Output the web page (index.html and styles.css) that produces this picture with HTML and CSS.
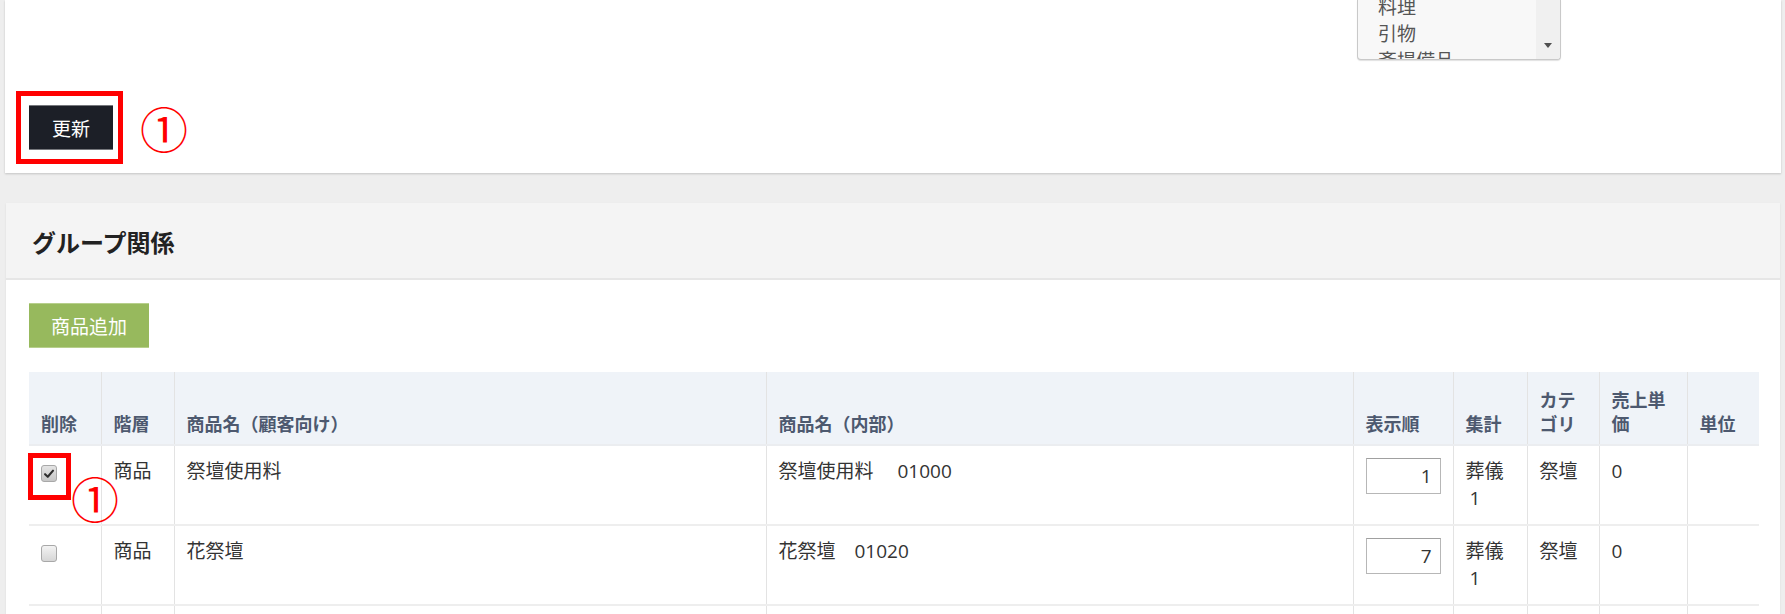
FILE: index.html
```html
<!DOCTYPE html>
<html lang="ja">
<head>
<meta charset="utf-8">
<title>グループ関係</title>
<link rel="stylesheet" href="styles.css">
</head>
<body>
<div class="page">
  <section class="panel panel-top">
    <div class="form-row">
      <div class="listbox">
        <ul class="listbox-items">
          <li>料理</li>
          <li>引物</li>
          <li>斎場備品</li>
        </ul>
        <div class="listbox-scroll"><span class="scroll-arrow"></span></div>
      </div>
    </div>
    <div class="actions">
      <span class="btn-wrap">
        <button class="btn btn-dark" type="button">更新</button>
        <span class="annot-box annot-box-btn"></span>
      </span>
      <span class="annot-num annot-num-inline">①</span>
    </div>
  </section>

  <section class="panel panel-group">
    <header class="panel-head"><h2 class="panel-title">グループ関係</h2></header>
    <div class="panel-body">
      <button class="btn btn-green" type="button">商品追加</button>
      <table class="grid">
        <colgroup>
          <col class="c-del"><col class="c-level"><col class="c-name"><col class="c-inner">
          <col class="c-order"><col class="c-sum"><col class="c-cat"><col class="c-price"><col class="c-unit">
        </colgroup>
        <thead>
          <tr>
            <th>削除</th>
            <th>階層</th>
            <th>商品名（顧客向け）</th>
            <th>商品名（内部）</th>
            <th>表示順</th>
            <th>集計</th>
            <th>カテゴリ</th>
            <th>売上単価</th>
            <th>単位</th>
          </tr>
        </thead>
        <tbody>
          <tr>
            <td>
              <span class="chk-wrap">
                <span class="chk chk-on"><svg viewBox="0 0 16 16" width="14" height="14"><path d="M3.5 8.2 L6.6 11.2 L12.6 4.2" fill="none" stroke="#2e2e2e" stroke-width="2.4" stroke-linecap="round" stroke-linejoin="round"/></svg></span>
                <span class="annot-box annot-box-chk"></span>
                <span class="annot-num annot-num-chk">①</span>
              </span>
            </td>
            <td>商品</td>
            <td>祭壇使用料</td>
            <td>祭壇使用料　 01000</td>
            <td><input class="order-input" type="text" value="1"></td>
            <td>葬儀 <span class="sum-num">1</span></td>
            <td>祭壇</td>
            <td>0</td>
            <td></td>
          </tr>
          <tr>
            <td><span class="chk-wrap"><span class="chk"></span></span></td>
            <td>商品</td>
            <td>花祭壇</td>
            <td>花祭壇　01020</td>
            <td><input class="order-input" type="text" value="7"></td>
            <td>葬儀 <span class="sum-num">1</span></td>
            <td>祭壇</td>
            <td>0</td>
            <td></td>
          </tr>
          <tr>
            <td><span class="chk-wrap"><span class="chk"></span></span></td>
            <td>商品</td>
            <td>生花</td>
            <td>生花　01030</td>
            <td><input class="order-input" type="text" value="8"></td>
            <td>葬儀 <span class="sum-num">1</span></td>
            <td>祭壇</td>
            <td>0</td>
            <td></td>
          </tr>
        </tbody>
      </table>
    </div>
  </section>
</div>
</body>
</html>
```

FILE: styles.css
```css
* { box-sizing: border-box; }
html, body { margin: 0; padding: 0; }
body {
  background: #eeeeee;
  font-family: "Open Sans", "Noto Sans CJK JP", sans-serif;
  font-size: 19px;
  line-height: 27px;
  color: #333333;
}
.page { padding: 0 4px 0 5px; }

.panel { background: #ffffff; }

/* top panel */
.panel-top {
  padding: 0 24px 23px 24px;
  box-shadow: 0 1px 2px rgba(0, 0, 0, 0.18);
}
.form-row {
  display: flex;
  justify-content: flex-end;
  padding-right: 196px;
}
.listbox {
  width: 204px;
  height: 60px;
  display: flex;
  background: #f8f8f8;
  border: 1px solid #c9c9c9;
  border-top: 0;
  border-radius: 0 0 4px 4px;
  box-shadow: 0 1px 1px rgba(0, 0, 0, 0.12);
  overflow: hidden;
}
.listbox-items {
  flex: 1;
  list-style: none;
  margin: -8px 0 0 0;
  padding: 0 0 0 20px;
  color: #555555;
  font-family: "Noto Sans CJK JP", sans-serif;
  font-size: 19px;
  line-height: 27px;
}
.listbox-scroll {
  width: 24px;
  background: #f0f0f0;
  display: flex;
  flex-direction: column;
  justify-content: flex-end;
  align-items: center;
  padding-bottom: 11px;
}
.scroll-arrow {
  width: 0;
  height: 0;
  border-left: 4px solid transparent;
  border-right: 4px solid transparent;
  border-top: 5px solid #505050;
}
.actions {
  display: flex;
  align-items: center;
  margin-top: 45px;
  height: 45px;
}

/* buttons */
.btn {
  display: block;
  font-family: "Noto Sans CJK JP", sans-serif;
  font-size: 19px;
  line-height: 27px;
  padding: 8px 23px;
  border: 0;
  border-top: 1px solid;
  border-bottom: 1px solid;
  color: #ffffff;
  cursor: pointer;
}
.btn-dark {
  background: #1c1f27;
  border-color: #75777c;
}
.btn-green {
  background: #97b95d;
  border-color: #b7cf8c;
  padding: 8px 22px;
}

/* annotations */
.btn-wrap { position: relative; display: block; }
.annot-box {
  position: absolute;
  border: 5px solid #ff0000;
}
.annot-box-btn { left: -13px; top: -14px; width: 107px; height: 73px; }
.annot-num {
  font-family: "Noto Sans CJK JP", sans-serif;
  color: #ff0000;
  font-size: 48px;
  line-height: 1;
}
.annot-num-inline {
  margin-left: 27px;
  line-height: 45px;
  height: 45px;
}
.annot-num-chk {
  position: absolute;
  left: 30px;
  top: 8px;
  width: 48px;
  height: 48px;
}
.annot-box-chk { left: -13px; top: -12px; width: 43px; height: 47px; }

/* group panel */
.panel-group {
  margin: 30px 1px 0 1px;
  box-shadow: 0 1px 2px rgba(0, 0, 0, 0.08);
}
.panel-head {
  background: #f4f4f4;
  border-bottom: 2px solid #e6e6e6;
  height: 77px;
  padding: 22px 26px 0 26px;
}
.panel-title {
  margin: 0;
  font-family: "Noto Sans CJK JP", sans-serif;
  font-size: 24px;
  line-height: 34px;
  font-weight: 700;
  color: #222222;
}
.panel-body { padding: 23px 21px 23px 23px; }

/* table */
.grid {
  width: 100%;
  margin-top: 24px;
  border-collapse: collapse;
  table-layout: fixed;
}
.c-del { width: 72px; }
.c-level { width: 73px; }
.c-name { width: 592px; }
.c-inner { width: 587px; }
.c-order { width: 100px; }
.c-sum { width: 74px; }
.c-cat { width: 72px; }
.c-price { width: 88px; }
.c-unit { width: 72px; }

.grid th, .grid td {
  border-left: 1px solid #e3e3e3;
  padding: 12px;
  text-align: left;
  vertical-align: top;
}
.grid th:first-child, .grid td:first-child { border-left: 0; }
.grid thead th {
  background: #eff3f8;
  color: #4d596f;
  font-family: "Noto Sans CJK JP", sans-serif;
  font-weight: 700;
  font-size: 18px;
  line-height: 24px;
  vertical-align: bottom;
  padding: 15px 12px 9px 12px;
  border-bottom: 2px solid #ebedf0;
}
.grid tbody td { border-top: 2px solid #eeeeee; }

.sum-num { margin-left: 4px; }

.chk-wrap {
  position: relative;
  display: block;
  width: 16px;
  height: 17px;
  margin-top: 7px;
}
.chk {
  display: flex;
  align-items: center;
  justify-content: center;
  width: 16px;
  height: 17px;
  border: 1px solid #a8a8a8;
  border-radius: 3px;
  background: linear-gradient(#f3f3f3, #d6d6d6);
}
.chk-on { background: linear-gradient(#e4e4e4, #c6c6c6); }

.order-input {
  display: block;
  width: 75px;
  height: 36px;
  margin: 0;
  padding: 0 8px;
  border: 1px solid #b7b7b7;
  border-top-color: #a0a0a0;
  font-family: "Open Sans", sans-serif;
  font-size: 19px;
  color: #333333;
  text-align: right;
  background: #ffffff;
}
```
